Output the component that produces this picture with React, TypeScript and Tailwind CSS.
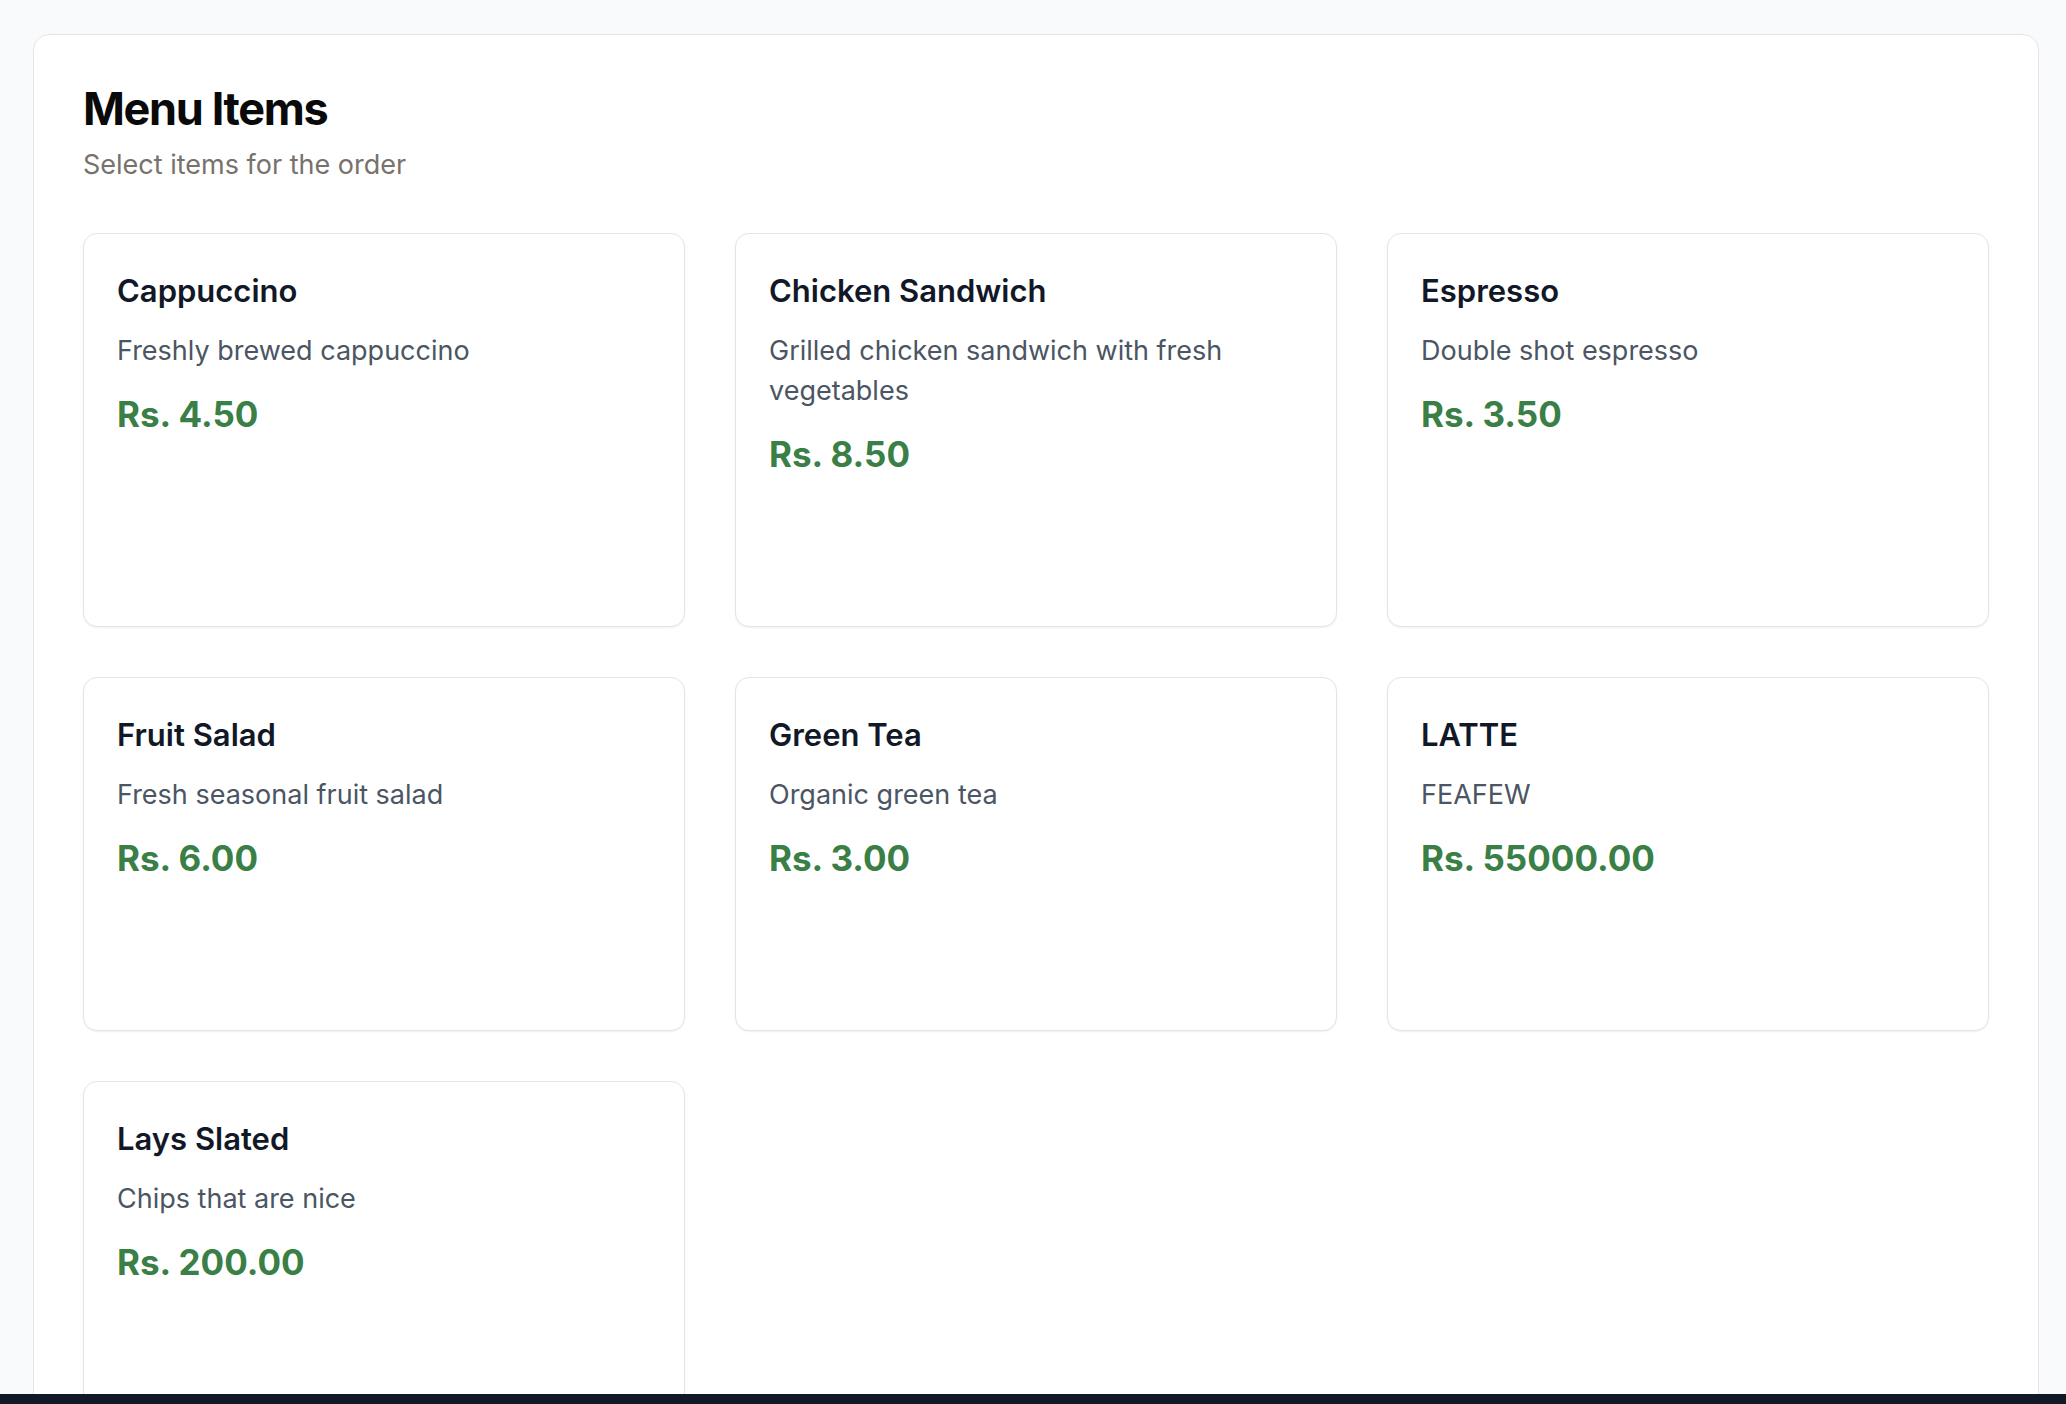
import React from 'react';

type MenuItem = {
  id: number;
  name: string;
  description: string;
  price: number;
};

const menuItems: MenuItem[] = [
  { id: 1, name: 'Cappuccino', description: 'Freshly brewed cappuccino', price: 4.5 },
  { id: 2, name: 'Chicken Sandwich', description: 'Grilled chicken sandwich with fresh vegetables', price: 8.5 },
  { id: 3, name: 'Espresso', description: 'Double shot espresso', price: 3.5 },
  { id: 4, name: 'Fruit Salad', description: 'Fresh seasonal fruit salad', price: 6 },
  { id: 5, name: 'Green Tea', description: 'Organic green tea', price: 3 },
  { id: 6, name: 'LATTE', description: 'FEAFEW', price: 55000 },
  { id: 7, name: 'Lays Slated', description: 'Chips that are nice', price: 200 },
];

const ItemCard: React.FC<{ item: MenuItem }> = ({ item }) => (
  <div className="bg-white border border-[#e4e4e7] rounded-[14px] shadow-[0_1px_2px_rgba(0,0,0,0.06)] pt-[35px] pb-[34px] pl-[33px] pr-[34px] flex flex-col">
    <h3 className="text-[31px] leading-[44px] font-semibold text-[#111827]">{item.name}</h3>
    <p className="mt-[18px] text-[27px] leading-[40px] text-[#4b5563]">{item.description}</p>
    <p className="mt-[19px] text-[35px] leading-[48px] font-bold text-[#3a7f46]">
      Rs. {item.price.toFixed(2)}
    </p>
    {/* room for quantity controls */}
    <div className="h-[114px]" />
  </div>
);

const App: React.FC = () => {
  return (
    <div className="h-screen flex flex-col bg-[#f9fafb] font-['Inter',sans-serif]">
      <main className="flex-1 overflow-hidden pt-[34px] pl-[33px] pr-[27px]">
        <section className="bg-white border border-[#e5e5e5] rounded-[16px] pt-[48px] px-[49px] pb-[49px]">
          <h1 className="text-[45px] leading-[52px] font-bold tracking-[-0.03em] text-[#0a0a0a]">Menu Items</h1>
          <p className="mt-[12px] text-[27px] leading-[36px] text-[#78716c]">Select items for the order</p>

          <div className="mt-[50px] grid grid-cols-3 gap-[50px]">
            {menuItems.map((item) => (
              <ItemCard key={item.id} item={item} />
            ))}
          </div>
        </section>
      </main>
      <footer className="h-[10px] bg-[#111827]" />
    </div>
  );
};

export default App;
